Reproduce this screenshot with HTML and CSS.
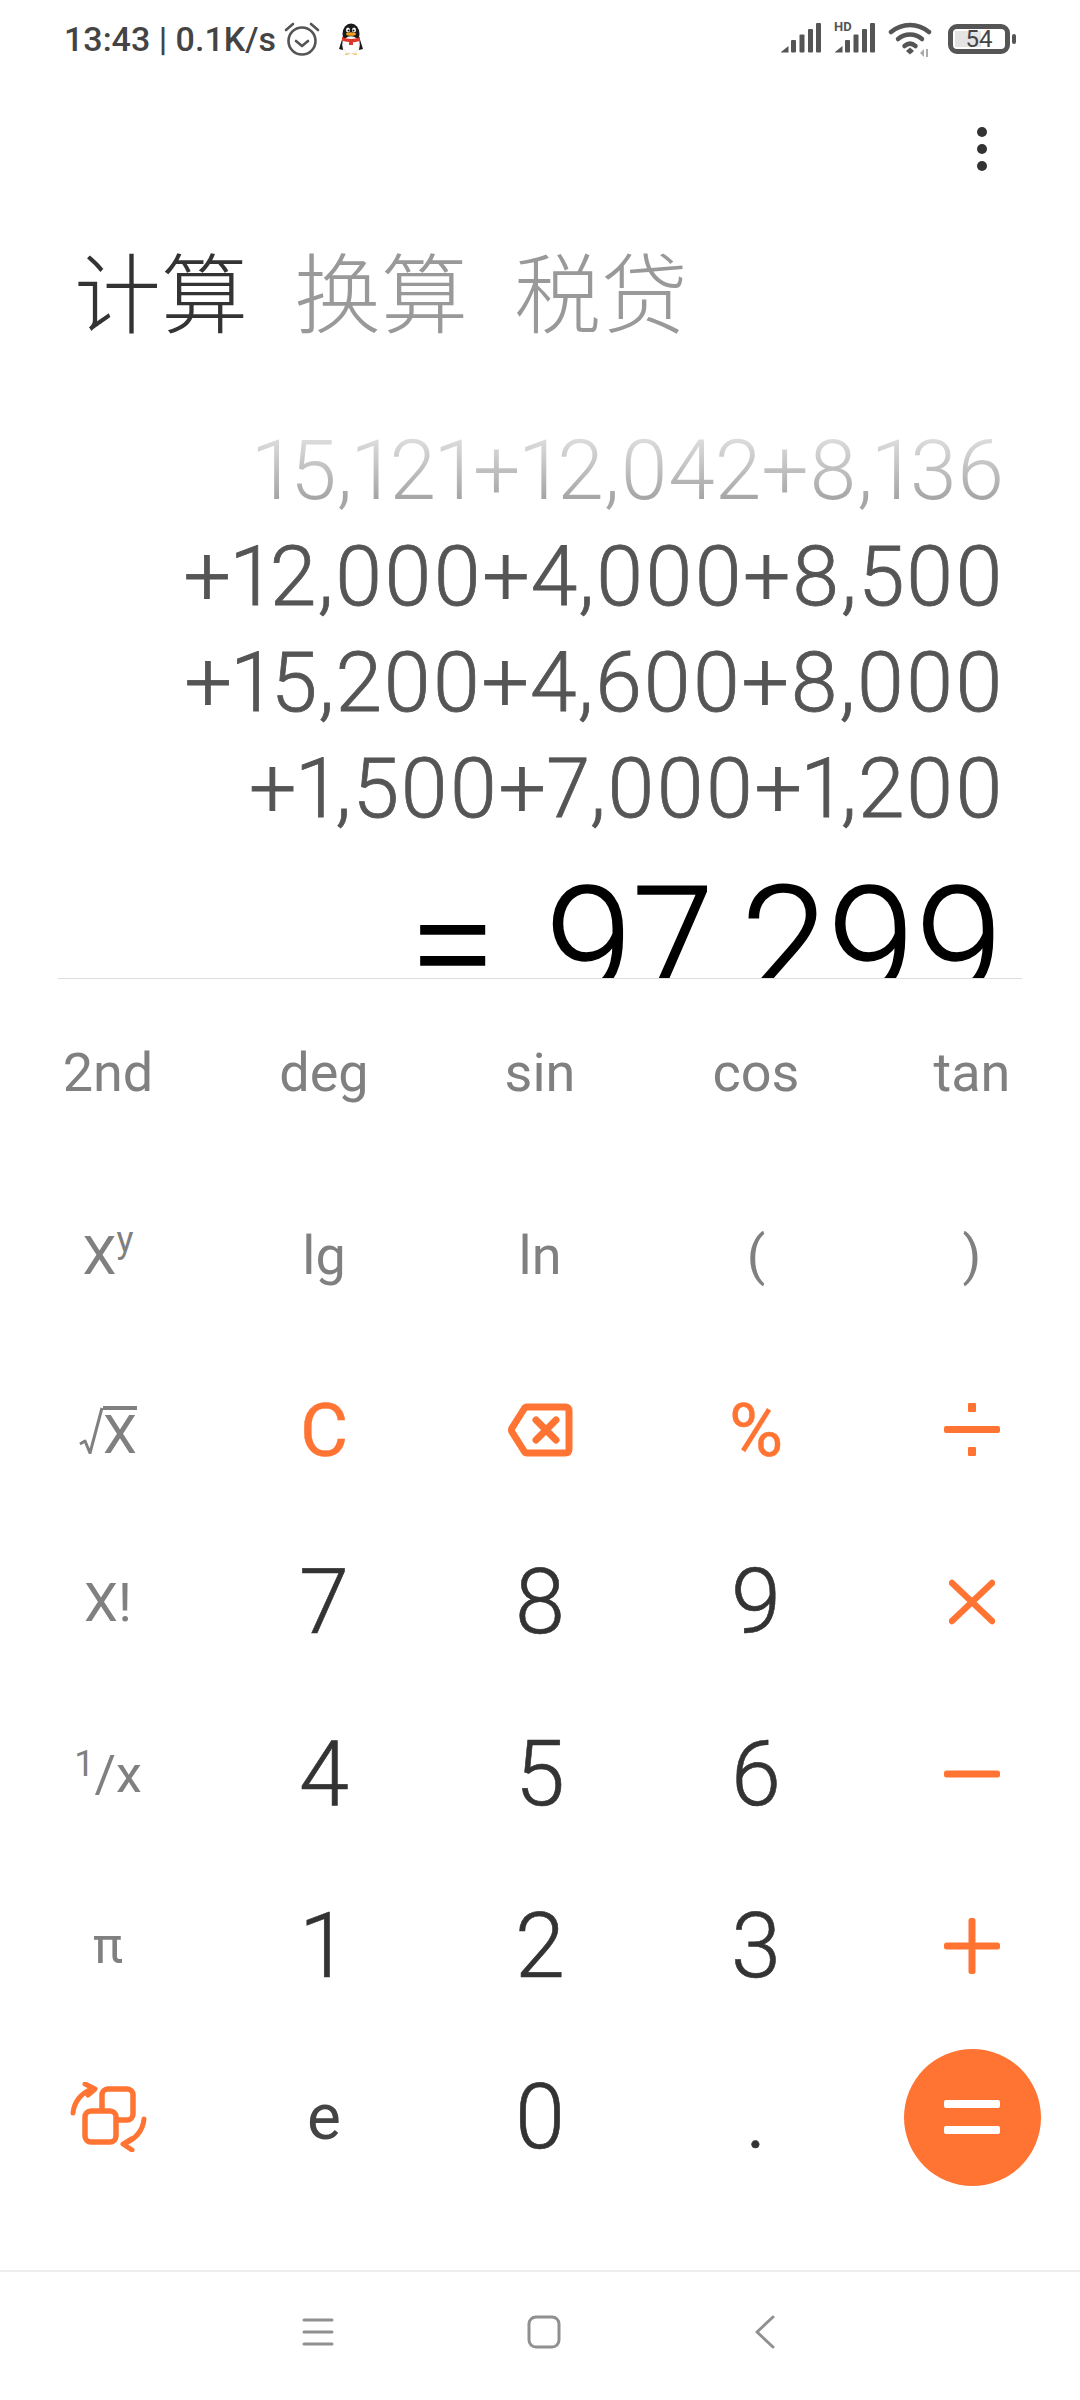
FILE: index.html
```html
<!DOCTYPE html>
<html lang="zh-CN">
<head>
    <meta charset="UTF-8">
    <meta name="viewport" content="width=device-width, initial-scale=1.0">
    <title>计算器</title>
    <link rel="stylesheet" href="styles.css">
</head>
<body>
    <div class="phone">
        <!-- Status bar -->
        <div class="status-bar">
            <div class="status-left">
                <span class="status-text">13:43 | 0.1K/s</span>
                <svg class="alarm" width="36" height="36" viewBox="0 0 36 36">
                    <circle cx="18" cy="20" r="13.5" fill="none" stroke="#555" stroke-width="2.6"/>
                    <path d="M12 20l6 5 6-5" fill="none" stroke="#555" stroke-width="2.6" stroke-linecap="round" stroke-linejoin="round"/>
                    <path d="M2 9l7-6M34 9l-7-6" fill="none" stroke="#555" stroke-width="2.6" stroke-linecap="round"/>
                </svg>
                <svg class="penguin" width="26" height="32" viewBox="0 0 26 32">
                    <ellipse cx="13" cy="11" rx="8.5" ry="10.5" fill="#1a1a1a"/>
                    <path d="M4.5 15L1 26l4 1zM21.500 15L25 26l-4 1z" fill="#1a1a1a"/>
                    <ellipse cx="13" cy="22" rx="8.500" ry="8.500" fill="#fff" stroke="#ddd" stroke-width=".6"/>
                    <ellipse cx="10" cy="7" rx="2" ry="2.600" fill="#fff"/>
                    <ellipse cx="16" cy="7" rx="2" ry="2.600" fill="#fff"/>
                    <circle cx="10.500" cy="7.500" r="1" fill="#111"/>
                    <circle cx="15.500" cy="7.500" r="1" fill="#111"/>
                    <ellipse cx="13" cy="11" rx="5" ry="1.800" fill="#f2a11f"/>
                    <path d="M4 14c5 2.500 13 2.500 18 0v3.500c-2 1-4 1.500-7 1.700V22h-4v-3c-3-.2-5-.7-7-1.500z" fill="#e0352b"/>
                    <path d="M7 30.500h5l-2 1.200H7zM14 30.500h5v1.200h-3z" fill="#f2b84a"/>
                </svg>
            </div>
            <div class="status-right">
                <svg width="42" height="32" viewBox="0 0 42 32">
                    <path d="M1 29l7.500-6v6.500H1z" fill="#555"/>
                    <rect x="11" y="17" width="5" height="12.500" rx="1" fill="#555"/>
                    <rect x="19.500" y="11.500" width="5" height="18" rx="1" fill="#555"/>
                    <rect x="28" y="6" width="5" height="23.500" rx="1" fill="#555"/>
                    <rect x="36" y="0" width="5" height="29.500" rx="1" fill="#555"/>
                </svg>
                <div class="signal-hd">
                    <span class="hd">HD</span>
                    <svg width="42" height="32" viewBox="0 0 42 32">
                        <path d="M1 29l7.500-6v6.500H1z" fill="#555"/>
                        <rect x="11" y="17" width="5" height="12.500" rx="1" fill="#555"/>
                        <rect x="19.500" y="11.500" width="5" height="18" rx="1" fill="#555"/>
                        <rect x="28" y="6" width="5" height="23.500" rx="1" fill="#555"/>
                        <rect x="36" y="0" width="5" height="29.500" rx="1" fill="#555"/>
                    </svg>
                </div>
                <svg width="46" height="36" viewBox="0 0 46 36">
                    <path d="M3 11c11-9.500 27-9.500 38 0" fill="none" stroke="#555" stroke-width="4.500" stroke-linecap="round"/>
                    <path d="M10 18c7-6 17-6 24 0" fill="none" stroke="#555" stroke-width="4.500" stroke-linecap="round"/>
                    <path d="M16.500 25c3.500-3 7.500-3 11 0" fill="none" stroke="#555" stroke-width="4.500" stroke-linecap="round"/>
                    <path d="M18 30l4-3.500 4 3.500-4 3.500z" fill="#555"/>
                    <path d="M32 32l4-4v8zM38 28h2v8h-2z" fill="#aaa"/>
                </svg>
                <div class="battery">
                    <div class="battery-body">
                        <span class="battery-fill"></span>
                        <span class="battery-level">54</span>
                    </div>
                    <span class="battery-nub"></span>
                </div>
            </div>
        </div>

        <div class="toolbar">
            <div class="more">
                <span></span><span></span><span></span>
            </div>
        </div>

        <div class="tabs">
            <span class="tab active">计算</span>
            <span class="tab">换算</span>
            <span class="tab">税贷</span>
        </div>

        <!-- Expression and result -->
        <div class="display">
            <div class="expr faded">15,121+12,042+8,136</div>
            <div class="expr">+12,000+4,000+8,500</div>
            <div class="expr">+15,200+4,600+8,000</div>
            <div class="expr">+1,500+7,000+1,200</div>
            <div class="result">= 97,299</div>
        </div>

        <!-- Keypad -->
        <div class="keypad">
            <button class="key fn">2nd</button>
            <button class="key fn">deg</button>
            <button class="key fn">sin</button>
            <button class="key fn">cos</button>
            <button class="key fn">tan</button>

            <button class="key fn">X<sup class="power">y</sup></button>
            <button class="key fn">lg</button>
            <button class="key fn">ln</button>
            <button class="key fn">(</button>
            <button class="key fn">)</button>

            <button class="key fn">
                <span class="root">
                    <svg width="24" height="48" viewBox="0 0 24 48"><path d="M1 38l5-3 5 12L23 2" fill="none" stroke="#808080" stroke-width="3" stroke-linejoin="round"/></svg>
                    <span class="root-x">X</span>
                </span>
            </button>
            <button class="key op op-text">C</button>
            <button class="key op">
                <svg width="66" height="54" viewBox="0 0 66 54">
                    <path d="M20 4h38q4 0 4 4v38q0 4-4 4H20q-2 0-3-2L5 29q-1-2 0-4L17 6q1-2 3-2z" fill="none" stroke="#ff7433" stroke-width="7" stroke-linejoin="round"/>
                    <path d="M29 17l20 20M49 17L29 37" fill="none" stroke="#ff7433" stroke-width="7" stroke-linecap="round"/>
                </svg>
            </button>
            <button class="key op op-text">%</button>
            <button class="key op">
                <svg width="56" height="54" viewBox="0 0 56 54">
                    <rect x="0" y="23" width="56" height="7" rx="2" fill="#ff7433"/>
                    <rect x="24" y="0" width="8" height="9" rx="1" fill="#ff7433"/>
                    <rect x="24" y="44" width="8" height="9" rx="1" fill="#ff7433"/>
                </svg>
            </button>

            <button class="key fn">X!</button>
            <button class="key num">7</button>
            <button class="key num">8</button>
            <button class="key num">9</button>
            <button class="key op">
                <svg width="46" height="46" viewBox="0 0 46 46"><path d="M3 4l40 38M43 4L3 42" fill="none" stroke="#ff7433" stroke-width="6.500" stroke-linecap="round"/></svg>
            </button>

            <button class="key fn frac"><sup class="frac-top">1</sup>/x</button>
            <button class="key num">4</button>
            <button class="key num">5</button>
            <button class="key num">6</button>
            <button class="key op">
                <svg width="56" height="8" viewBox="0 0 56 8"><rect width="56" height="7" y=".5" rx="2.500" fill="#ff7433"/></svg>
            </button>

            <button class="key fn pi">π</button>
            <button class="key num">1</button>
            <button class="key num">2</button>
            <button class="key num">3</button>
            <button class="key op">
                <svg width="56" height="56" viewBox="0 0 56 56">
                    <rect y="24.500" width="56" height="7" rx="2.500" fill="#ff7433"/>
                    <rect x="24.500" width="7" height="56" rx="2.500" fill="#ff7433"/>
                </svg>
            </button>

            <button class="key op">
                <svg width="78" height="70" viewBox="0 0 78 70">
                    <rect x="33" y="7" width="31" height="31" rx="6" fill="none" stroke="#ff7433" stroke-width="5.500"/>
                    <rect x="16" y="29" width="31" height="31" rx="6" fill="#fff" stroke="#ff7433" stroke-width="5.500"/>
                    <path d="M4 31c1-11 8-20 19-24M16 2l10 5-7 6" fill="none" stroke="#ff7433" stroke-width="5" stroke-linecap="round" stroke-linejoin="round"/>
                    <path d="M75 37c-1 11-8 20-19 24M63 68l-9-6 8-5" fill="none" stroke="#ff7433" stroke-width="5" stroke-linecap="round" stroke-linejoin="round"/>
                </svg>
            </button>
            <button class="key fn letter">e</button>
            <button class="key num">0</button>
            <button class="key num">.</button>
            <button class="key">
                <span class="equals"><span></span><span></span></span>
            </button>
        </div>

        <!-- Navigation bar -->
        <div class="nav-bar">
            <svg width="32" height="28" viewBox="0 0 32 28"><path d="M2 2h28M2 14h28M2 26h28" fill="none" stroke="#909090" stroke-width="3" stroke-linecap="round"/></svg>
            <svg width="34" height="34" viewBox="0 0 34 34"><rect x="2" y="2" width="30" height="30" rx="7" fill="none" stroke="#909090" stroke-width="3"/></svg>
            <svg width="22" height="34" viewBox="0 0 22 34"><path d="M19 2L3 17l16 15" fill="none" stroke="#909090" stroke-width="3" stroke-linecap="round" stroke-linejoin="round"/></svg>
        </div>
    </div>
</body>
</html>
```

FILE: styles.css
```css
body {
    margin: 0;
    background: white;
    font-family: Roboto, "Noto Sans CJK SC", sans-serif;
}

.phone {
    width: 1080px;
    height: 2400px;
    display: flex;
    flex-direction: column;
    overflow: hidden;
}

.phone > * {
    flex-shrink: 0;
}

/* Status bar */
.status-bar {
    height: 78px;
    padding: 0 64px;
    display: flex;
    justify-content: space-between;
    align-items: center;
    box-sizing: border-box;
}

.status-left {
    display: flex;
    align-items: center;
}

.status-text {
    font-size: 34px;
    font-weight: 500;
    color: #444;
}

.alarm {
    margin-left: 8px;
}

.penguin {
    margin-left: 18px;
}

.status-right {
    display: flex;
    align-items: center;
    gap: 12px;
}

.signal-hd {
    position: relative;
    display: flex;
}

.hd {
    position: absolute;
    left: 0;
    top: -3px;
    font-size: 13px;
    line-height: 14px;
    font-weight: 700;
    color: #555;
}

.battery {
    display: flex;
    align-items: center;
    gap: 2px;
    margin-left: 2px;
}

.battery-body {
    width: 62px;
    height: 30px;
    border: 5px solid #555;
    border-radius: 9px;
    box-sizing: border-box;
    display: flex;
    justify-content: center;
    align-items: center;
    position: relative;
}

.battery-fill {
    position: absolute;
    left: 2px;
    top: 2px;
    bottom: 2px;
    width: 26px;
    background: #e4e4e4;
}

.battery-level {
    position: relative;
    font-size: 24px;
    color: #444;
}

.battery-nub {
    width: 4px;
    height: 10px;
    background: #555;
    border-radius: 2px;
}

/* Toolbar */
.toolbar {
    height: 142px;
    padding-right: 93px;
    display: flex;
    justify-content: flex-end;
    align-items: center;
    box-sizing: border-box;
}

.more {
    display: flex;
    flex-direction: column;
    gap: 7px;
}

.more span {
    width: 10px;
    height: 10px;
    border-radius: 50%;
    background: #333;
}

/* Tabs */
.tabs {
    height: 121px;
    margin-top: 19px;
    padding-left: 74px;
    display: flex;
    gap: 46px;
    font-family: "Noto Sans CJK SC", sans-serif;
    font-size: 87px;
    font-weight: 300;
    line-height: 100px;
    box-sizing: border-box;
}

.tab {
    color: #999;
}

.tab.active {
    color: #333;
}

/* Display */
.display {
    height: 619px;
    margin: 0 58px;
    padding: 58px 18px 0 0;
    border-bottom: 1px solid #ddd;
    box-sizing: border-box;
    overflow: hidden;
    text-align: right;
    font-variant-numeric: proportional-nums;
}

.expr {
    font-size: 84px;
    font-weight: 300;
    line-height: 106px;
    letter-spacing: 1px;
    color: #555;
    white-space: nowrap;
    -webkit-text-stroke: 0.8px #555;
}

.expr.faded {
    letter-spacing: 0;
    color: transparent;
    background: linear-gradient(to bottom, #dcdcdc 20%, #a6a6a6 75%);
    -webkit-background-clip: text;
    background-clip: text;
    -webkit-text-stroke: 0;
}

.result {
    margin-top: 24px;
    font-size: 156px;
    font-weight: 300;
    line-height: 156px;
    word-spacing: 12px;
    color: #000;
    white-space: nowrap;
    -webkit-text-stroke: 1.5px #000;
}

/* Keypad */
.keypad {
    display: grid;
    grid-template-columns: repeat(5, 216px);
    grid-template-rows: 187px 178px repeat(4, 172px) 170px;
}

.key {
    padding: 0;
    border: none;
    background: none;
    font-family: inherit;
    display: flex;
    justify-content: center;
    align-items: center;
}

.fn {
    font-size: 54px;
    font-weight: 400;
    color: #808080;
}

.letter {
    color: #444;
    font-size: 64px;
}

.num {
    font-size: 90px;
    font-weight: 300;
    color: #333;
    -webkit-text-stroke: 0.6px #333;
}

.op {
    color: #ff7433;
}

.op-text {
    font-size: 74px;
    font-weight: 400;
    -webkit-text-stroke: 0.4px #ff7433;
}

.power {
    font-size: 36px;
    line-height: 1;
    margin-top: -30px;
}

.root {
    display: flex;
    align-items: flex-end;
}

.root-x {
    height: 44px;
    line-height: 50px;
    border-top: 4px solid #808080;
}

.frac {
    font-size: 52px;
}

.frac-top {
    font-size: 36px;
    line-height: 1;
    margin-top: -20px;
}

.pi {
    font-size: 50px;
}

.equals {
    width: 137px;
    height: 137px;
    border-radius: 50%;
    background: #ff7433;
    display: flex;
    flex-direction: column;
    justify-content: center;
    align-items: center;
    gap: 18px;
}

.equals span {
    width: 56px;
    height: 8px;
    border-radius: 2px;
    background: white;
}

/* Navigation bar */
.nav-bar {
    height: 130px;
    margin-top: 68px;
    padding: 0 304px 8px 302px;
    border-top: 2px solid #eee;
    display: flex;
    justify-content: space-between;
    align-items: center;
    box-sizing: border-box;
}
```
